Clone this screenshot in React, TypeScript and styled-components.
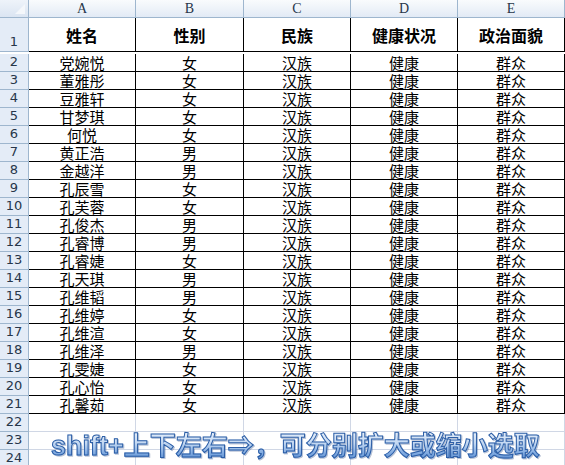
import React from "react";
import styled, { createGlobalStyle } from "styled-components";

const GlobalStyle = createGlobalStyle`
  html, body {
    margin: 0;
    padding: 0;
    background: #ffffff;
    overflow: hidden;
  }
`;

const HEADER_LINE = "#9eb6ce";
const GRID_LINE = "#d0d7e5";

const Sheet = styled.div`
  position: relative;
  display: grid;
  grid-template-columns: 29px 107px 108px 107px 107px 107px;
  grid-auto-rows: 18px;
  width: 565px;
  height: 465px;
  overflow: hidden;
  font-family: "Noto Sans CJK SC", sans-serif;
`;

const Corner = styled.div`
  position: relative;
  background: linear-gradient(#eef3fa, #dbe5f2);
  border-right: 1px solid ${HEADER_LINE};
  border-bottom: 1px solid ${HEADER_LINE};
  &::after {
    content: "";
    position: absolute;
    right: 3px;
    bottom: 3px;
    border-style: solid;
    border-width: 0 0 10px 10px;
    border-color: transparent transparent #f4f7fb transparent;
  }
`;

const ColHead = styled.div`
  display: flex;
  align-items: center;
  justify-content: center;
  background: linear-gradient(#f9fbfd 0%, #eef3f9 50%, #e2eaf5 100%);
  border-right: 1px solid ${HEADER_LINE};
  border-bottom: 1px solid ${HEADER_LINE};
  font-family: "Liberation Serif", serif;
  font-size: 14px;
  color: #27364a;
`;

const RowHead = styled.div<{ $tall?: boolean }>`
  display: flex;
  align-items: flex-end;
  justify-content: center;
  height: ${(p) => (p.$tall ? "34px" : "18px")};
  box-sizing: border-box;
  padding-bottom: 1px;
  background: #e4ecf7;
  border-right: 1px solid ${HEADER_LINE};
  border-bottom: 1px solid ${HEADER_LINE};
  font-family: "DejaVu Sans", sans-serif;
  font-size: 13px;
  line-height: 16px;
  color: #27364a;
`;

const Cell = styled.div<{ $tall?: boolean; $bold?: boolean; $plain?: boolean }>`
  display: flex;
  align-items: center;
  justify-content: center;
  height: ${(p) => (p.$tall ? "34px" : "18px")};
  box-sizing: border-box;
  border-right: 1px solid ${(p) => (p.$plain ? GRID_LINE : "#000")};
  border-bottom: 1px solid ${(p) => (p.$plain ? GRID_LINE : "#000")};
  font-size: ${(p) => (p.$bold ? "16px" : "15px")};
  font-weight: ${(p) => (p.$bold ? 700 : 400)};
  line-height: 1;
  color: #000;
  white-space: nowrap;
`;

const WordArt = styled.div`
  position: absolute;
  left: 51px;
  top: 428px;
  display: flex;
  align-items: baseline;
  white-space: nowrap;
  font-size: 26px;
  font-weight: 700;
  line-height: 32px;
  color: transparent;
  background: linear-gradient(180deg, #f2f7fd 0%, #c3d8f2 45%, #7ea9e0 75%, #4f82c8 100%);
  -webkit-background-clip: text;
  background-clip: text;
  -webkit-text-stroke: 1px #2c5ea6;
  filter: drop-shadow(1px 1px 0 rgba(60, 90, 140, 0.35));
`;

const Latin = styled.span`
  font-family: "Liberation Sans", sans-serif;
  font-size: 27px;
`;

const Cjk = styled.span`
  font-family: "Noto Sans CJK SC", sans-serif;
`;

const heads = ["姓名", "性别", "民族", "健康状况", "政治面貌"];

const people: [string, string][] = [
  ["党婉悦", "女"],
  ["董雅彤", "女"],
  ["豆雅轩", "女"],
  ["甘梦琪", "女"],
  ["何悦", "女"],
  ["黄正浩", "男"],
  ["金越洋", "男"],
  ["孔辰雪", "女"],
  ["孔芙蓉", "女"],
  ["孔俊杰", "男"],
  ["孔睿博", "男"],
  ["孔睿婕", "女"],
  ["孔天琪", "男"],
  ["孔维韬", "男"],
  ["孔维婷", "女"],
  ["孔维渲", "女"],
  ["孔维泽", "男"],
  ["孔雯婕", "女"],
  ["孔心怡", "女"],
  ["孔馨茹", "女"],
];

export default function App() {
  return (
    <>
      <GlobalStyle />
      <Sheet>
        <Corner />
        {["A", "B", "C", "D", "E"].map((c) => (
          <ColHead key={c}>{c}</ColHead>
        ))}

        <RowHead $tall style={{ gridRow: "span 2" }}>1</RowHead>
        {heads.map((h) => (
          <Cell key={h} $tall $bold style={{ gridRow: "span 2" }}>
            {h}
          </Cell>
        ))}

        {people.map(([name, sex], i) => (
          <React.Fragment key={name}>
            <RowHead>{i + 2}</RowHead>
            <Cell>{name}</Cell>
            <Cell>{sex}</Cell>
            <Cell>汉族</Cell>
            <Cell>健康</Cell>
            <Cell>群众</Cell>
          </React.Fragment>
        ))}

        {[22, 23, 24].map((n) => (
          <React.Fragment key={n}>
            <RowHead>{n}</RowHead>
            {[0, 1, 2, 3, 4].map((k) => (
              <Cell key={k} $plain />
            ))}
          </React.Fragment>
        ))}

        <WordArt>
          <Latin>shift+</Latin>
          <Cjk>上下左右⇒，可分别扩大或缩小选取</Cjk>
        </WordArt>
      </Sheet>
    </>
  );
}
